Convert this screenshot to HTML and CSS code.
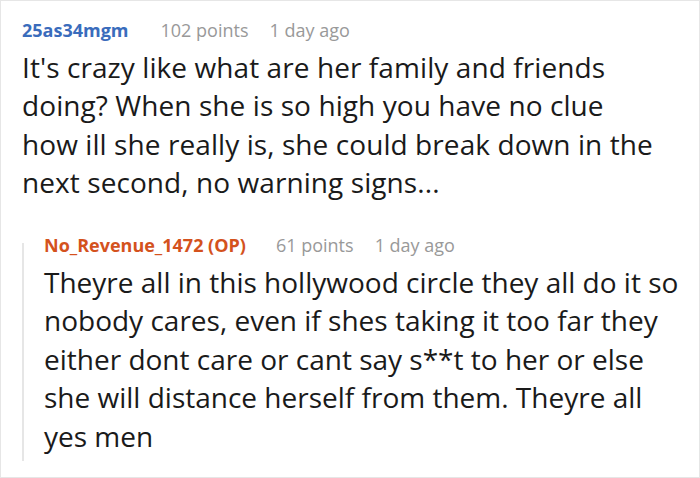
FILE: index.html
```html
<!DOCTYPE html>
<html><head><meta charset="utf-8"><link rel="stylesheet" href="styles.css"></head>
<body>
<div class="card">
  <div class="comment">
    <div class="meta"><span class="user">25as34mgm</span><span class="points">102 points</span><span class="time">1 day ago</span></div>
    <p class="body">It's crazy like what are her family and friends<br>doing? When she is so high you have no clue<br>how ill she really is, she could break down in the<br>next second, no warning signs...</p>
  </div>
  <div class="reply">
    <div class="thread"></div>
    <div class="reply-content">
      <div class="meta"><span class="user op">No_Revenue_1472 (OP)</span><span class="points">61 points</span><span class="time">1 day ago</span></div>
      <p class="body">Theyre all in this hollywood circle they all do it so<br>nobody cares, even if shes taking it too far they<br>either dont care or cant say s**t to her or else<br>she will distance herself from them. Theyre all<br>yes men</p>
    </div>
  </div>
</div>
</body></html>
```
FILE: styles.css
```css
html,body{margin:0;padding:0;background:#fff;}
.card{box-sizing:border-box;width:700px;height:478px;border:1px solid #e6e6e6;padding:17px 0 15px 21px;font-family:"Open Sans","Noto Sans",sans-serif;color:#1a1a1a;overflow:hidden;}
.meta{display:flex;align-items:baseline;font-size:18px;line-height:24px;white-space:nowrap;}
.user{font-weight:700;color:#3a6cbc;margin-right:32px;}
.user.op{color:#d4521d;margin-right:30px;}
.points{color:#999;margin-right:21px;}
.time{color:#999;}
.body{margin:6px 0 0;font-size:28px;line-height:38px;letter-spacing:0.08px;white-space:nowrap;}
.comment .body{line-height:38.4px;}
.reply{display:flex;margin-top:31px;}
.thread{width:2px;background:#e6e6e6;margin-top:10px;flex:none;}
.reply-content{padding:0 0 6px 20px;}
.reply-content .body{line-height:38.5px;letter-spacing:0;}
```
